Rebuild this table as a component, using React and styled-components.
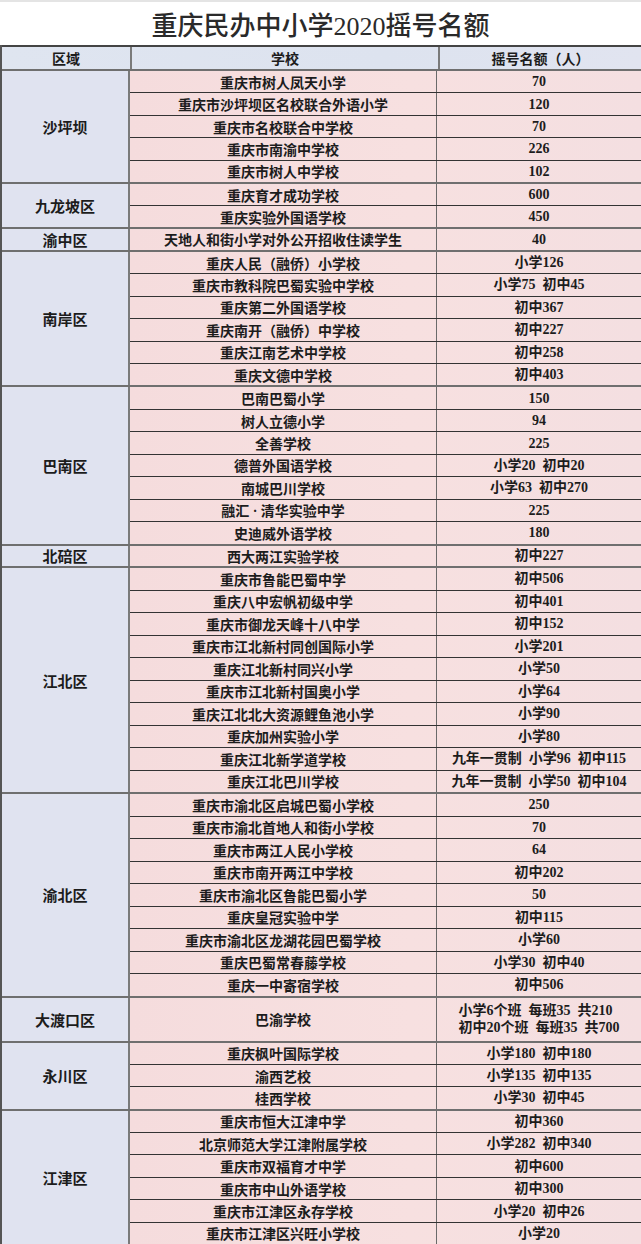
import React from "react";
import styled, { createGlobalStyle } from "styled-components";

const GlobalStyle = createGlobalStyle`
  html, body {
    margin: 0;
    padding: 0;
    background: #ffffff;
    overflow: hidden;
  }
  * { box-sizing: border-box; }
`;

const UNIT = 22.6;

const Page = styled.div`
  width: 641px;
  font-family: "Liberation Serif", "Noto Sans CJK SC", serif;
  color: #1c1c1c;
  background: #fff;
`;

const Title = styled.h1`
  margin: 0;
  height: 45px;
  border-top: 2px solid #e4e4e4;
  display: flex;
  align-items: center;
  justify-content: center;
  font-size: 26px;
  font-weight: 500;
  color: #2a2a2a;
`;

const Table = styled.div`
  display: flex;
  flex-direction: column;
  border-left: 2px solid #555;
`;

const HeaderRow = styled.div`
  display: grid;
  grid-template-columns: 128px 308px 1fr;
  height: 24px;
  border-top: 2px solid #444;
  background: linear-gradient(90deg, #dfe5f0 0%, #dde3ef 60%, #e1e4f0 100%);
`;

const HeaderCell = styled.div`
  display: flex;
  align-items: center;
  justify-content: center;
  font-size: 14px;
  font-weight: 600;
  border-left: ${(p) => (p.$first ? "none" : "2px solid #7a7a7a")};
`;

const Group = styled.div`
  display: flex;
  height: ${(p) => p.$units * UNIT}px;
  border-top: 2px solid #6f6f6f;
`;

const RegionCell = styled.div`
  width: 128px;
  flex: none;
  display: flex;
  align-items: center;
  justify-content: center;
  background: #e0e3f0;
  font-size: 15px;
  font-weight: 600;
  border-right: 2px solid #7a7a7a;
`;

const Rows = styled.div`
  flex: 1;
  display: flex;
  flex-direction: column;
  background: linear-gradient(90deg, #f5dcdd 0%, #f7e0e0 55%, #f4dfe1 100%);
`;

const Row = styled.div`
  flex: ${(p) => p.$units} 1 0;
  min-height: 0;
  display: grid;
  grid-template-columns: 307px 1fr;
  border-top: ${(p) => (p.$first ? "none" : "1px solid #333")};
`;

const SchoolCell = styled.div`
  display: flex;
  align-items: center;
  justify-content: center;
  font-size: 14px;
  font-weight: 600;
  white-space: nowrap;
  border-right: 1.5px solid #6a6a6a;
`;

const QuotaCell = styled.div`
  display: flex;
  flex-direction: column;
  align-items: center;
  justify-content: center;
  font-size: 14px;
  font-weight: 600;
  line-height: 17px;
  white-space: pre;
`;

const data = [
  {
    region: "沙坪坝",
    rows: [
      ["重庆市树人凤天小学", "70"],
      ["重庆市沙坪坝区名校联合外语小学", "120"],
      ["重庆市名校联合中学校", "70"],
      ["重庆市南渝中学校", "226"],
      ["重庆市树人中学校", "102"],
    ],
  },
  {
    region: "九龙坡区",
    rows: [
      ["重庆育才成功学校", "600"],
      ["重庆实验外国语学校", "450"],
    ],
  },
  {
    region: "渝中区",
    rows: [["天地人和街小学对外公开招收住读学生", "40"]],
  },
  {
    region: "南岸区",
    rows: [
      ["重庆人民（融侨）小学校", "小学126"],
      ["重庆市教科院巴蜀实验中学校", "小学75  初中45"],
      ["重庆第二外国语学校", "初中367"],
      ["重庆南开（融侨）中学校", "初中227"],
      ["重庆江南艺术中学校", "初中258"],
      ["重庆文德中学校", "初中403"],
    ],
  },
  {
    region: "巴南区",
    rows: [
      ["巴南巴蜀小学", "150"],
      ["树人立德小学", "94"],
      ["全善学校", "225"],
      ["德普外国语学校", "小学20  初中20"],
      ["南城巴川学校", "小学63  初中270"],
      ["融汇 · 清华实验中学", "225"],
      ["史迪威外语学校", "180"],
    ],
  },
  {
    region: "北碚区",
    rows: [["西大两江实验学校", "初中227"]],
  },
  {
    region: "江北区",
    rows: [
      ["重庆市鲁能巴蜀中学", "初中506"],
      ["重庆八中宏帆初级中学", "初中401"],
      ["重庆市御龙天峰十八中学", "初中152"],
      ["重庆市江北新村同创国际小学", "小学201"],
      ["重庆江北新村同兴小学", "小学50"],
      ["重庆市江北新村国奥小学", "小学64"],
      ["重庆江北北大资源鲤鱼池小学", "小学90"],
      ["重庆加州实验小学", "小学80"],
      ["重庆江北新学道学校", "九年一贯制  小学96  初中115"],
      ["重庆江北巴川学校", "九年一贯制  小学50  初中104"],
    ],
  },
  {
    region: "渝北区",
    rows: [
      ["重庆市渝北区启城巴蜀小学校", "250"],
      ["重庆市渝北首地人和街小学校", "70"],
      ["重庆市两江人民小学校", "64"],
      ["重庆市南开两江中学校", "初中202"],
      ["重庆市渝北区鲁能巴蜀小学", "50"],
      ["重庆皇冠实验中学", "初中115"],
      ["重庆市渝北区龙湖花园巴蜀学校", "小学60"],
      ["重庆巴蜀常春藤学校", "小学30  初中40"],
      ["重庆一中寄宿学校", "初中506"],
    ],
  },
  {
    region: "大渡口区",
    rows: [["巴渝学校", "小学6个班  每班35  共210\n初中20个班  每班35  共700", 2]],
  },
  {
    region: "永川区",
    rows: [
      ["重庆枫叶国际学校", "小学180  初中180"],
      ["渝西艺校", "小学135  初中135"],
      ["桂西学校", "小学30  初中45"],
    ],
  },
  {
    region: "江津区",
    rows: [
      ["重庆市恒大江津中学", "初中360"],
      ["北京师范大学江津附属学校", "小学282  初中340"],
      ["重庆市双福育才中学", "初中600"],
      ["重庆市中山外语学校", "初中300"],
      ["重庆市江津区永存学校", "小学20  初中26"],
      ["重庆市江津区兴旺小学校", "小学20"],
    ],
  },
];

export default function App() {
  return (
    <Page>
      <GlobalStyle />
      <Title>重庆民办中小学2020摇号名额</Title>
      <Table>
        <HeaderRow>
          <HeaderCell $first>区域</HeaderCell>
          <HeaderCell>学校</HeaderCell>
          <HeaderCell>摇号名额（人）</HeaderCell>
        </HeaderRow>
        {data.map((g) => {
          const units = g.rows.reduce((s, r) => s + (r[2] || 1), 0);
          return (
            <Group key={g.region} $units={units}>
              <RegionCell>{g.region}</RegionCell>
              <Rows>
                {g.rows.map((r, i) => (
                  <Row key={r[0]} $units={r[2] || 1} $first={i === 0}>
                    <SchoolCell>{r[0]}</SchoolCell>
                    <QuotaCell>{r[1]}</QuotaCell>
                  </Row>
                ))}
              </Rows>
            </Group>
          );
        })}
      </Table>
    </Page>
  );
}
